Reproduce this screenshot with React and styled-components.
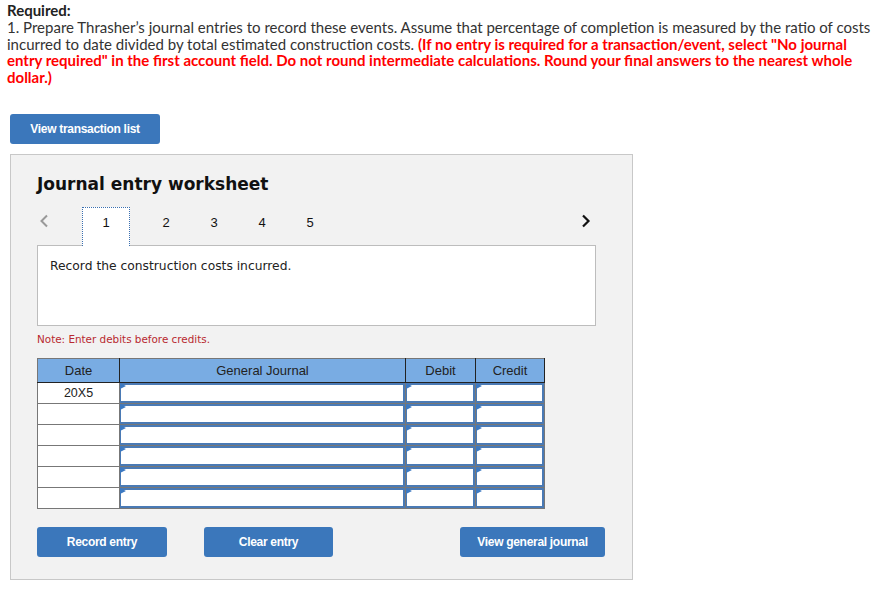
import React from "react";
import styled, { createGlobalStyle } from "styled-components";

const Global = createGlobalStyle`
  html, body { margin: 0; padding: 0; background: #fff; }
  body { font-family: "Lato", "Open Sans", sans-serif; }
`;

const Page = styled.div`
  padding: 2px 0 0 7px;
  width: 884px;
  box-sizing: border-box;
`;

const Instructions = styled.div`
  font-family: "Lato", sans-serif;
  font-size: 15px;
  line-height: 16.75px;
  color: #333;
  white-space: nowrap;
`;

const Heading = styled.div`
  font-weight: 700;
  color: #222;
`;

const Red = styled.span`
  color: #f00;
  font-weight: 700;
`;

const Button = styled.button`
  display: inline-flex;
  align-items: center;
  justify-content: center;
  height: 30px;
  width: ${(p) => p.$w}px;
  background: #3b77bb;
  color: #fff;
  border: none;
  border-radius: 3px;
  font-family: "Liberation Sans", Arial, sans-serif;
  font-weight: 700;
  font-size: 12px;
  letter-spacing: -0.3px;
  padding: 0;
  cursor: pointer;
`;

const TopButtonWrap = styled.div`
  margin: 28px 0 0 3px;
`;

const Panel = styled.div`
  margin: 10px 0 0 3px;
  width: 623px;
  height: 426px;
  box-sizing: border-box;
  background: #f2f2f2;
  border: 1px solid #c8c8c8;
  padding: 19px 27px 0 26px;
`;

const Title = styled.h2`
  margin: 0;
  font-family: "DejaVu Sans", Verdana, sans-serif;
  font-size: 17px;
  line-height: 20px;
  font-weight: 700;
  color: #111;
`;

const TabRow = styled.div`
  display: flex;
  align-items: flex-start;
  margin-top: 13px;
  width: 559px;
  position: relative;
  z-index: 1;
`;

const Arrow = styled.div`
  width: 45px;
  height: 28px;
  display: flex;
  align-items: center;
  padding-left: 2px;
  box-sizing: border-box;
  color: #999;
`;

const Tabs = styled.div`
  display: flex;
  flex: 1;
`;

const Tab = styled.div`
  width: 48px;
  height: 39px;
  box-sizing: border-box;
  text-align: center;
  padding-top: 7px;
  font-family: "Liberation Sans", Arial, sans-serif;
  font-size: 13px;
  color: #111;
  margin-right: ${(p) => (p.$active ? 12 : 0)}px;
  background: ${(p) => (p.$active ? "#fff" : "transparent")};
  border: 1px ${(p) => (p.$active ? "dotted #3a6fb0" : "solid transparent")};
  border-bottom: none;
`;

const NextArrow = styled.div`
  width: 20px;
  height: 28px;
  display: flex;
  align-items: center;
  justify-content: center;
  color: #111;
`;

const DescBox = styled.div`
  margin-top: -1px;
  width: 559px;
  height: 81px;
  box-sizing: border-box;
  background: #fff;
  border: 1px solid #bdbdbd;
  padding: 12px 12px;
  font-family: "DejaVu Sans", Verdana, sans-serif;
  font-size: 12.3px;
  line-height: 16px;
  color: #222;
`;

const Note = styled.div`
  margin-top: 7px;
  font-family: "DejaVu Sans", Verdana, sans-serif;
  font-size: 10.4px;
  line-height: 12px;
  color: #b8292f;
`;

const Table = styled.table`
  margin-top: 13px;
  border-collapse: collapse;
  table-layout: fixed;
  border: 1px solid #777;
`;

const Th = styled.th`
  width: ${(p) => p.$w}px;
  height: 23px;
  padding: 0;
  background: #79ace3;
  border: 1px solid #777;
  border-bottom: 1px solid #222;
  border-right: 1px solid #222;
  font-family: "Liberation Sans", Arial, sans-serif;
  font-size: 13px;
  font-weight: 400;
  color: #222;
  text-align: center;
`;

const DateCell = styled.td`
  height: 20px;
  padding: 0;
  border: 1px solid #777;
  background: #fff;
  font-family: "Liberation Sans", Arial, sans-serif;
  font-size: 12.5px;
  line-height: 14px;
  color: #222;
  text-align: center;
  vertical-align: top;
  padding-top: 3px;
  box-sizing: border-box;
`;

const InputCell = styled.td`
  padding: 0;
  border: 1px solid #777;
  background: #fff;
  position: relative;
  height: 20px;
`;

const Field = styled.div`
  position: absolute;
  inset: 0;
  border: 2px solid #4a7ab5;
  border-left-width: 1px;
  background: #fff;
`;

const Flag = styled.span`
  position: absolute;
  top: 0;
  left: 0;
  width: 0;
  height: 0;
  border-left: 6px solid #3c79c2;
  border-top: 3.5px solid transparent;
  border-bottom: 3.5px solid transparent;
`;

const ButtonRow = styled.div`
  display: flex;
  margin-top: 18px;
  width: 568px;
`;

const LeftButtons = styled.div`
  display: flex;
  gap: 37px;
  flex: 1;
`;

const Chevron = ({ dir }) => (
  <svg width="10" height="14" viewBox="0 0 10 14">
    <path
      d={dir === "left" ? "M8 1.5 L2.5 7 L8 12.5" : "M2 1.5 L7.5 7 L2 12.5"}
      fill="none"
      stroke="currentColor"
      strokeWidth={dir === "left" ? 2 : 2.2}
    />
  </svg>
);

const rows = ["20X5", "", "", "", "", ""];

export default function App() {
  return (
    <>
      <Global />
      <Page>
        <Instructions>
          <Heading>Required:</Heading>
          1. Prepare Thrasher’s journal entries to record these events. Assume that percentage of completion is measured by the ratio of costs
          <br />
          incurred to date divided by total estimated construction costs.{" "}
          <Red>(If no entry is required for a transaction/event, select "No journal</Red>
          <br />
          <Red>entry required" in the first account field. Do not round intermediate calculations. Round your final answers to the nearest whole</Red>
          <br />
          <Red>dollar.)</Red>
        </Instructions>
        <TopButtonWrap>
          <Button $w={150}>View transaction list</Button>
        </TopButtonWrap>
        <Panel>
          <Title>Journal entry worksheet</Title>
          <TabRow>
            <Arrow>
              <Chevron dir="left" />
            </Arrow>
            <Tabs>
              <Tab $active>1</Tab>
              <Tab>2</Tab>
              <Tab>3</Tab>
              <Tab>4</Tab>
              <Tab>5</Tab>
            </Tabs>
            <NextArrow>
              <Chevron dir="right" />
            </NextArrow>
          </TabRow>
          <DescBox>Record the construction costs incurred.</DescBox>
          <Note>Note: Enter debits before credits.</Note>
          <Table>
            <thead>
              <tr>
                <Th $w={81}>Date</Th>
                <Th $w={285}>General Journal</Th>
                <Th $w={69}>Debit</Th>
                <Th $w={68}>Credit</Th>
              </tr>
            </thead>
            <tbody>
              {rows.map((d, i) => (
                <tr key={i}>
                  <DateCell>{d}</DateCell>
                  {[0, 1, 2].map((c) => (
                    <InputCell key={c}>
                      <Field />
                      <Flag />
                    </InputCell>
                  ))}
                </tr>
              ))}
            </tbody>
          </Table>
          <ButtonRow>
            <LeftButtons>
              <Button $w={130}>Record entry</Button>
              <Button $w={129}>Clear entry</Button>
            </LeftButtons>
            <Button $w={145}>View general journal</Button>
          </ButtonRow>
        </Panel>
      </Page>
    </>
  );
}
